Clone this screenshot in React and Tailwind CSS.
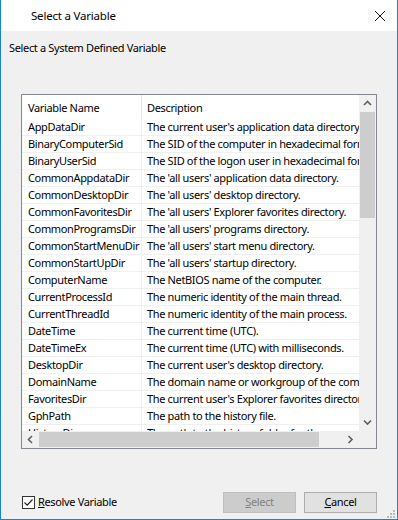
import { useState } from "react";

const rows = [
  ["AppDataDir", "The current user's application data directory."],
  ["BinaryComputerSid", "The SID of the computer in hexadecimal format."],
  ["BinaryUserSid", "The SID of the logon user in hexadecimal format."],
  ["CommonAppdataDir", "The 'all users' application data directory."],
  ["CommonDesktopDir", "The 'all users' desktop directory."],
  ["CommonFavoritesDir", "The 'all users' Explorer favorites directory."],
  ["CommonProgramsDir", "The 'all users' programs directory."],
  ["CommonStartMenuDir", "The 'all users' start menu directory."],
  ["CommonStartUpDir", "The 'all users' startup directory."],
  ["ComputerName", "The NetBIOS name of the computer."],
  ["CurrentProcessId", "The numeric identity of the main thread."],
  ["CurrentThreadId", "The numeric identity of the main process."],
  ["DateTime", "The current time (UTC)."],
  ["DateTimeEx", "The current time (UTC) with milliseconds."],
  ["DesktopDir", "The current user's desktop directory."],
  ["DomainName", "The domain name or workgroup of the computer."],
  ["FavoritesDir", "The current user's Explorer favorites directory."],
  ["GphPath", "The path to the history file."],
  ["HistoryDir", "The path to the history folder for the user."],
];

const Chevron = ({ dir }) => {
  const d = {
    up: "M1 5 L4.5 1.5 L8 5",
    down: "M1 1.5 L4.5 5 L8 1.5",
    left: "M5 1 L1.5 4.5 L5 8",
    right: "M1.5 1 L5 4.5 L1.5 8",
  }[dir];
  const vert = dir === "up" || dir === "down";
  return (
    <svg width={vert ? 9 : 7} height={vert ? 7 : 9} viewBox={vert ? "0 0 9 7" : "0 0 7 9"}>
      <path d={d} fill="none" stroke="#606060" strokeWidth="1.6" />
    </svg>
  );
};

export default function App() {
  const [resolve, setResolve] = useState(true);

  return (
    <div
      className="w-[398px] h-[520px] flex flex-col bg-[#f0f0f0] border-x border-b border-[#1883d7] text-[11px] tracking-[-0.35px] text-black"
      style={{ fontFamily: '"Noto Sans", "Open Sans", sans-serif' }}
    >
      {/* title bar */}
      <div className="h-[31px] bg-white flex items-center justify-between pl-[30px] pr-[11px] shrink-0">
        <span className="text-[11.5px] tracking-[-0.2px]">Select a Variable</span>
        <svg width="12" height="12" viewBox="0 0 12 12">
          <path d="M1 1 L11 11 M11 1 L1 11" stroke="#111" strokeWidth="1" />
        </svg>
      </div>

      <div className="pl-[8px] pt-[9px] h-[63px] shrink-0">Select a System Defined Variable</div>

      {/* list view */}
      <div className="ml-[20px] w-[356px] h-[355px] border border-[#828790] bg-white flex overflow-hidden shrink-0">
        <div className="flex-1 flex flex-col min-w-0">
          <div className="flex-1 overflow-hidden">
            <div className="w-[480px]">
              <div className="flex h-[24px] items-center">
                <div className="w-[120px] pl-[6px] pt-[2px] border-r border-[#e5e5e5] h-full flex items-center">Variable Name</div>
                <div className="pl-[5px] pt-[2px]">Description</div>
              </div>
              {rows.map(([name, desc]) => (
                <div key={name} className="flex h-[17px] border-b border-[#f0f0f0] leading-[16px]">
                  <div className="w-[120px] pl-[6px] border-r border-[#f0f0f0] whitespace-nowrap overflow-hidden">{name}</div>
                  <div className="pl-[5px] whitespace-nowrap">{desc}</div>
                </div>
              ))}
            </div>
          </div>
          <div className="h-[17px] bg-[#f0f0f0] flex items-center shrink-0">
            <div className="w-[17px] flex justify-center"><Chevron dir="left" /></div>
            <div className="flex-1 h-full py-[1px]">
              <div className="h-full w-[280px] bg-[#cdcdcd]" />
            </div>
            <div className="w-[17px] flex justify-center"><Chevron dir="right" /></div>
          </div>
        </div>
        <div className="w-[17px] flex flex-col bg-[#f0f0f0] shrink-0">
          <div className="flex-1 flex flex-col">
            <div className="h-[17px] flex items-center justify-center"><Chevron dir="up" /></div>
            <div className="flex-1 px-[1px]">
              <div className="w-full h-[106px] bg-[#cdcdcd]" />
            </div>
            <div className="h-[17px] flex items-center justify-center"><Chevron dir="down" /></div>
          </div>
          <div className="h-[17px] shrink-0" />
        </div>
      </div>

      {/* footer */}
      <div className="flex-1 flex items-end pb-[6px] pl-[21px] pr-[20px]">
        <div className="flex items-center w-full">
          <label className="flex items-center gap-[3px] cursor-default" onClick={() => setResolve(!resolve)}>
            <span className="w-[13px] h-[13px] border border-[#333] bg-white flex items-center justify-center">
              {resolve && (
                <svg width="11" height="11" viewBox="0 0 11 11">
                  <path d="M1.5 5.5 L4.2 8.2 L9.5 2.5" fill="none" stroke="#222" strokeWidth="1.2" />
                </svg>
              )}
            </span>
            <span><u>R</u>esolve Variable</span>
          </label>
          <div className="ml-auto flex gap-[8px]">
            <button className="w-[73px] h-[21px] bg-[#cccccc] border border-[#bfbfbf] text-[#838383]">
              <u>S</u>elect
            </button>
            <button className="w-[73px] h-[21px] bg-[#e1e1e1] border border-[#adadad]">
              <u>C</u>ancel
            </button>
          </div>
        </div>
      </div>
      <div className="relative h-0">
        <svg className="absolute right-[2px] bottom-[1px]" width="9" height="9" viewBox="0 0 9 9">
          <g fill="#bcbcbc">
            <rect x="7" y="1" width="2" height="2" />
            <rect x="4" y="4" width="2" height="2" />
            <rect x="7" y="4" width="2" height="2" />
            <rect x="1" y="7" width="2" height="2" />
            <rect x="4" y="7" width="2" height="2" />
            <rect x="7" y="7" width="2" height="2" />
          </g>
        </svg>
      </div>
    </div>
  );
}
